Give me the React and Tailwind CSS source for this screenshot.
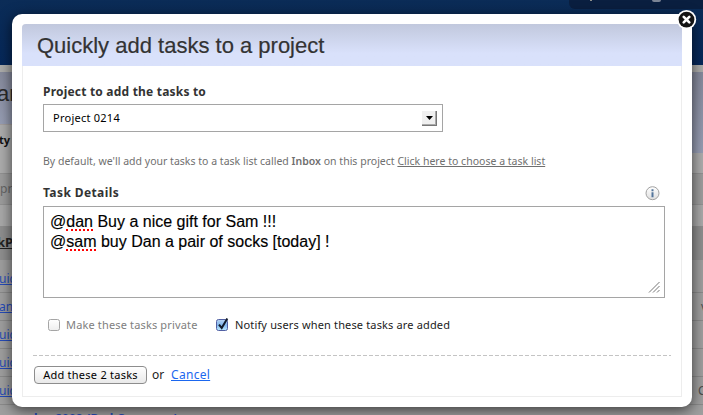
import React from "react";

const lucida = "font-['Noto_Sans','Open_Sans',sans-serif]";
const arial = "font-['Liberation_Sans',Arial,sans-serif]";

const rows = [
  { left: "uick", right: "" },
  { left: "ank", right: "v" },
  { left: "uick", right: "" },
  { left: "uick", right: "" },
  { left: "uick", right: "C" },
];

function Backdrop() {
  return (
    <div className="flex h-[415px] w-[703px] flex-col overflow-hidden bg-[#9f9f9f] whitespace-nowrap">
      <div className="flex h-[65px] shrink-0 items-start justify-end bg-linear-to-b from-[#0b2c57] to-[#06285a]">
        <div className="flex h-[9px] w-[134px] items-start rounded-bl-[6px] bg-[#0a1f40]">
          <span className="ml-[21px] h-[1px] w-[2px] bg-[#8d8f8c]" />
          <span className="ml-[60px] h-[2px] w-[9px] rounded-b-full bg-[#7b8494]" />
        </div>
      </div>
      <div className="h-[7px] shrink-0 bg-[#adadab]" />
      <div className="flex h-[101px] shrink-0 justify-between">
        <div className="w-[352px]">
          <div className="h-[53px] border-b border-[#a39e9e] bg-linear-to-b from-[#868a9c] to-[#979eb4]">
            <span className={`${arial} -ml-[3px] block pt-[7px] text-[22px] leading-[30px] text-[#2b2b2b]`}>an</span>
          </div>
          <div className={`${lucida} h-[48px] bg-[#adadad] pt-[6px] text-[11px] leading-[18px] font-bold text-[#111]`}>
            <span className="-ml-px">ty</span>
          </div>
        </div>
        <div className="w-[351px]">
          <div className="h-[81px] bg-linear-to-b from-[#868a9c] to-[#979eb4]" />
          <div className="h-[20px] bg-[#adadad]" />
        </div>
      </div>
      <div className={`${lucida} h-[32px] shrink-0 border-y border-[#929292] bg-[#9d9d9d] pt-[5px] text-[12px] leading-[20px] text-[#666]`}>pr</div>
      <div className="h-[21px] shrink-0 bg-[#a9a9a9]" />
      <div className="h-[34px] shrink-0 bg-[#8f8f8f] pt-[6px]">
        <span className={`${lucida} -ml-[3px] block text-[13px] leading-[20px] font-bold text-[#222] underline`}>kP</span>
      </div>
      <div className="shrink-0 pt-[5px]">
        {rows.map((row, i) => (
          <div key={i} className={`${lucida} flex h-[28px] items-start justify-between border-b border-[#8a8a8a] text-[12px] leading-[28px]`}>
            <span className="-ml-px text-[#264bb8] underline">{row.left}</span>
            <span className={row.right === "v" ? "w-[2px] text-[#4d4d4d]" : "w-[5px] text-[#4d4d4d]"}>{row.right}</span>
          </div>
        ))}
      </div>
      <div className={`${lucida} shrink-0 pt-[3px] pl-[30px] text-[12px] leading-[22px] font-bold tracking-[0.1px] text-[#264bb8]`}>day 2009 (Bad Company)</div>
    </div>
  );
}

function CloseButton() {
  return (
    <svg className="absolute -top-[5px] -right-[5px] size-[21px]" viewBox="0 0 21 21">
      <circle cx="10.5" cy="10.7" r="9.7" fill="#fff" />
      <circle cx="10.5" cy="10.6" r="7.9" fill="#141414" />
      <path d="M7.7 7.8l5.6 5.6M13.3 7.8l-5.6 5.6" stroke="#fff" strokeWidth="2.6" strokeLinecap="round" />
    </svg>
  );
}

function InfoIcon() {
  return (
    <svg className="size-[15px]" viewBox="0 0 15 15">
      <defs>
        <linearGradient id="info" x1="0" y1="0" x2="0" y2="1">
          <stop offset="0" stopColor="#fff" />
          <stop offset="1" stopColor="#dedede" />
        </linearGradient>
      </defs>
      <circle cx="7.5" cy="7.2" r="6.5" fill="url(#info)" stroke="#a2a2a2" />
      <path d="M6.5 3.3h2v2h-2zM6.5 6.2h2v5h-2z" fill="#53759b" />
    </svg>
  );
}

function Check({ checked }) {
  return (
    <svg className="h-[15px] w-[14px] shrink-0 overflow-visible" viewBox="0 0 14 15">
      <defs>
        <linearGradient id="tick-on" x1="0" y1="0" x2="0" y2="1">
          <stop offset="0" stopColor="#b8d3f1" />
          <stop offset=".5" stopColor="#82b7ec" />
          <stop offset="1" stopColor="#bceaff" />
        </linearGradient>
        <linearGradient id="tick-off" x1="0" y1="0" x2="0" y2="1">
          <stop offset="0" stopColor="#fff" />
          <stop offset="1" stopColor="#eee" />
        </linearGradient>
      </defs>
      <rect x=".5" y="1.5" width="11" height="11" rx="2" fill={checked ? "url(#tick-on)" : "url(#tick-off)"} stroke={checked ? "#5260a3" : "#a5a5a5"} />
      {checked && <path d="M3 6.6l2.7 3.3L11.3 .4" fill="none" stroke="#111a2a" strokeWidth="2" />}
    </svg>
  );
}

function Dialog() {
  return (
    <div className="absolute top-[14px] left-[12px] h-[393px] w-[680px] rounded-[10px] bg-white p-[10px] whitespace-nowrap shadow-[0_3px_14px_0_rgba(0,0,0,0.65)]">
      <CloseButton />
      <div className="flex h-[373px] flex-col rounded-t-[4px] border border-t-0 border-[#ededed]">
        <div className="-mx-px h-[42px] shrink-0 rounded-t-[4px] bg-linear-to-b from-[#c1c8dd] to-[#d9e1fb] to-70% pl-[15px]">
          <h1 className={`${arial} text-[22px] leading-[43px] text-[#333] [-webkit-text-stroke:0.2px_#333]`}>Quickly add tasks to a project</h1>
        </div>
        <div className="flex flex-col pl-[20px]">
          <label className={`${lucida} mt-[17px] h-[18px] text-[12px] leading-[18px] font-bold tracking-[0.2px] text-[#333]`}>Project to add the tasks to</label>
          <div className="mt-[3px] flex h-[28px] w-[400px] items-center justify-between border border-[#a5a5a5] pr-[5px] pl-[9px]">
            <span className={`${lucida} text-[11px] leading-[26px] tracking-[0.25px] text-black`}>Project 0214</span>
            <span className="flex h-[15px] w-[15px] items-center justify-center border-r border-b border-[#777] bg-[#f0f0f0] shadow-[inset_-1px_-1px_0_#aaa]">
              <svg className="h-[4px] w-[7px]" viewBox="0 0 7 4"><path d="M0 0h7L3.5 4z" /></svg>
            </span>
          </div>
          <p className={`${lucida} mt-[20px] h-[18px] text-[10.5px] leading-[18px] tracking-[0.015px] text-[#6f6f6f]`}>
            By default, we'll add your tasks to a task list called <b className="font-semibold">Inbox</b> on this project <u>Click here to choose a task list</u>
          </p>
          <div className="mt-[14px] flex h-[18px] w-[617px] items-center justify-between">
            <label className={`${lucida} text-[12px] leading-[18px] font-bold tracking-[0.4px] text-[#333]`}>Task Details</label>
            <InfoIcon />
          </div>
          <div className={`${arial} mt-[4px] flex h-[92px] w-[622px] flex-col justify-between border border-[#a5a5a5] pt-[5px] pl-[6px] text-[16px] leading-[20px] text-black [-webkit-text-stroke:0.15px_#000]`}>
            <div>
              <div>@<span className="inline-block h-[19px] border-b-2 border-dotted border-[#f00] align-top">dan</span> Buy a nice gift for Sam !!!</div>
              <div>@<span className="inline-block h-[19px] border-b-2 border-dotted border-[#f00] align-top">sam</span> buy Dan a pair of socks [today] !</div>
            </div>
            <svg className="mr-[4px] mb-[4px] size-[12px] self-end" viewBox="0 0 12 12">
              <path d="M1 11.5L11.5 1M5 11.5L11.5 5M9 11.5L11.5 9" stroke="#777" fill="none" />
            </svg>
          </div>
        </div>
        <div className={`${lucida} mt-[18px] flex h-[18px] items-center pl-[25px] text-[11px] leading-[18px] tracking-[0.15px]`}>
          <Check />
          <span className="ml-[4px] w-[150px] text-[#808080]">Make these tasks private</span>
          <Check checked />
          <span className="ml-[5px] text-[#222]">Notify users when these tasks are added</span>
        </div>
        <div className="mt-[21px] ml-[10px] h-px w-[638px] shrink-0 bg-[repeating-linear-gradient(to_right,#c4c4c4_0_4px,transparent_4px_6px)]" />
        <div className={`${lucida} mt-[10px] ml-[11px] flex h-[18px] items-center text-[12px]`}>
          <button className="h-[18px] w-[113px] shrink-0 rounded-[4px] border border-[#8d8d8d] bg-linear-to-b from-white to-[#e9e9e9] text-[11px] leading-[14px] tracking-[0.25px] text-black">Add these 2 tasks</button>
          <span className="ml-[5px] w-[19px] text-[#222]">or</span>
          <a className="tracking-[0.3px] text-[#1b67ef] underline">Cancel</a>
        </div>
      </div>
    </div>
  );
}

export default function App() {
  return (
    <div className="relative h-[415px] w-[703px] overflow-hidden">
      <Backdrop />
      <Dialog />
    </div>
  );
}
